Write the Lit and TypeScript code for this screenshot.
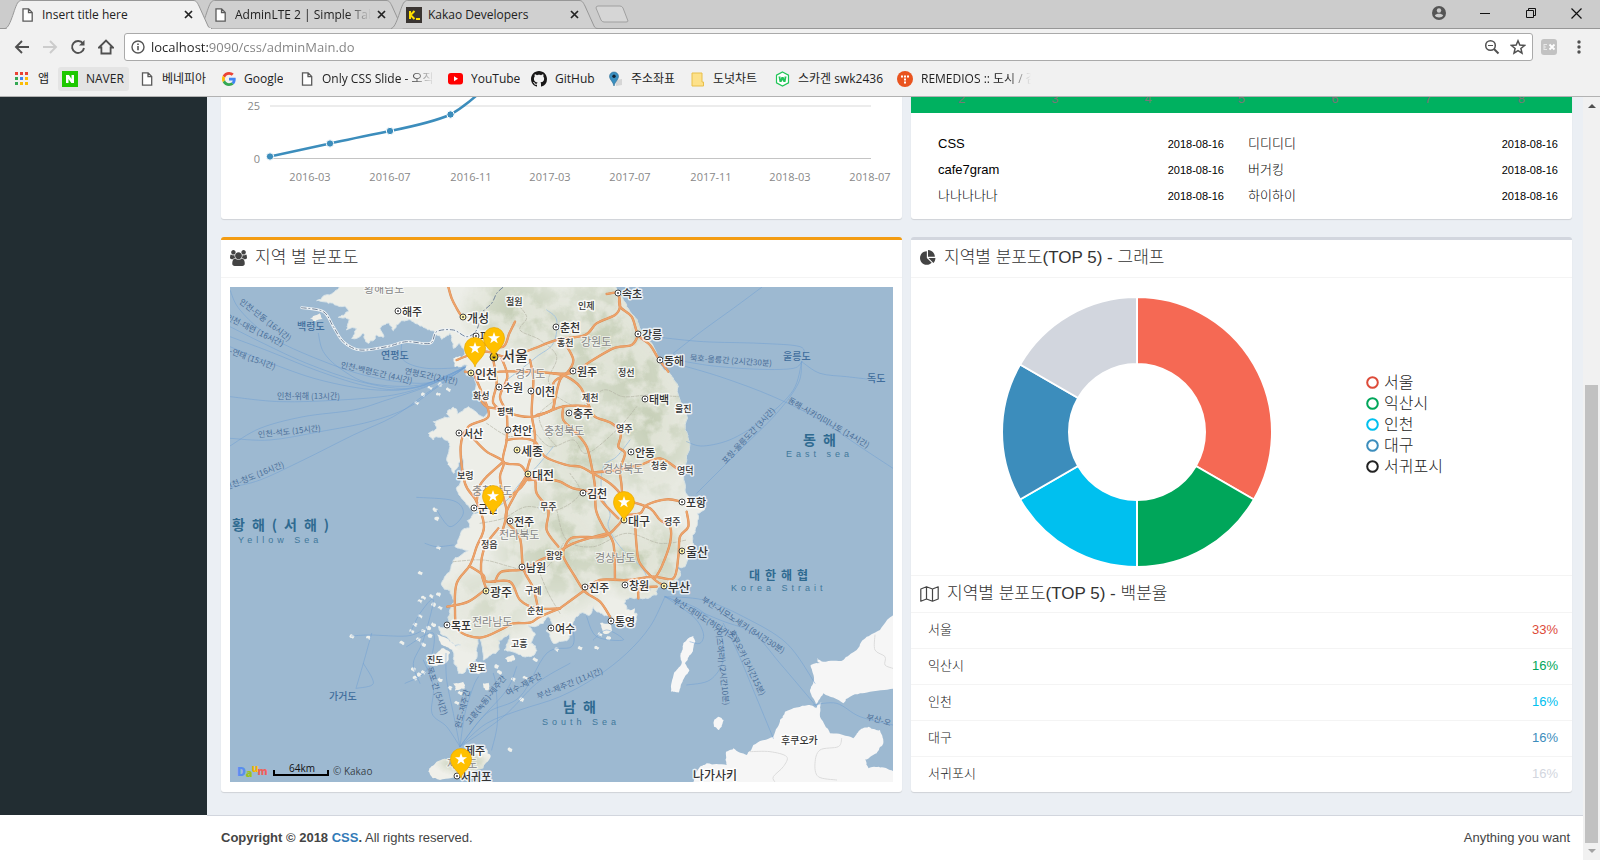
import { LitElement, html, svg, css } from "lit";
import { customElement } from "lit/decorators.js";

type Pt = [number, number];

/* ---------- geometry helpers ---------- */

const pts = (s: string): Pt[] => s.trim().split(/\s+/).map((p) => p.split(",").map(Number) as Pt);

/* Splits each edge and shifts the midpoints, so that a coast looks ragged. */
function rough(s: string, amp: number, seed = 7): string {
  let list = pts(s);
  let state = seed;
  const rnd = () => {
    state = (state * 16807) % 2147483647;
    return state / 2147483647 - 0.5;
  };
  let a = amp;
  for (let pass = 0; pass < 3; pass++) {
    const next: Pt[] = [];
    list.forEach((p, i) => {
      const q = list[(i + 1) % list.length];
      const len = Math.hypot(q[0] - p[0], q[1] - p[1]);
      next.push(p);
      if (len > 6) {
        const k = Math.min(a, len * 0.45);
        next.push([(p[0] + q[0]) / 2 + rnd() * k, (p[1] + q[1]) / 2 + rnd() * k]);
      }
    });
    list = next;
    a *= 0.6;
  }
  return "M" + list.map((p) => p[0].toFixed(1) + " " + p[1].toFixed(1)).join("L") + "Z";
}

/* Smooth open curve through the points. */
function smooth(s: string): string {
  const p = pts(s);
  let d = `M${p[0][0]} ${p[0][1]}`;
  for (let i = 0; i < p.length - 1; i++) {
    const a = p[Math.max(0, i - 1)], b = p[i], c = p[i + 1], e = p[Math.min(p.length - 1, i + 2)];
    d += `C${(b[0] + (c[0] - a[0]) / 6).toFixed(1)} ${(b[1] + (c[1] - a[1]) / 6).toFixed(1)} ${(c[0] - (e[0] - b[0]) / 6).toFixed(1)} ${(c[1] - (e[1] - b[1]) / 6).toFixed(1)} ${c[0]} ${c[1]}`;
  }
  return d;
}

/* ---------- map data (survey grid: three units to a pixel) ---------- */

const KOREA = rough(
  `365,15 340,38 290,62 330,68 375,78 385,95 355,112 388,118 380,150 410,146 395,175 430,160 445,190 470,165 490,172 480,145 500,130 520,152 545,122 580,125 600,138 640,152 665,178 690,160 700,205 720,188 735,222 705,240 715,262 742,256 738,285 765,292 770,340 805,385 790,412 745,380 712,402 700,382 680,402 690,412 640,425 650,445 625,460 640,480 665,470 690,500 680,540 702,580 715,550 722,522 728,580 712,620 722,650 748,682 762,700 742,722 750,742
   725,752 705,800 745,812 700,840 682,880 665,915 690,930 702,965 690,1000 690,1040 655,1040 662,1062 690,1085 722,1095 692,1105 702,1150 715,1180 745,1160 770,1135 776,1070 790,1140 828,1120 835,1080 870,1062 862,1090 852,1110 890,1120 930,1130 950,1112 932,1090 945,1060 925,1035 970,1030 985,1010 1000,1040 978,1052 1000,1090
   1040,1082 1055,1050 1065,1015 1080,1000 1110,1005 1120,980 1145,1000 1170,1005 1180,1030 1220,1040 1245,1030 1250,1000 1220,990 1215,960 1255,955 1310,945 1320,920 1350,915 1380,890 1370,860 1395,860 1420,790 1425,750 1432,700 1455,688 1425,670 1395,630 1395,560 1410,490 1395,450 1398,390 1380,360 1375,320 1345,275 1320,250 1295,190 1255,130 1220,80 1195,35 1185,15`, 12);

const ISLES = [
  rough("625,1475 650,1445 700,1430 760,1415 800,1405 812,1430 790,1465 740,1485 660,1500 640,1495", 8, 3),
  rough("640,1135 665,1105 690,1120 678,1150 650,1158 622,1150", 10, 5),
  rough("752,1155 780,1145 798,1160 775,1182 752,1172", 8, 9),
  rough("650,1060 680,1075 715,1110 690,1108 662,1090", 8, 11),
  rough("1140,1028 1170,1030 1175,1055 1150,1060", 8, 13),
  rough("1215,990 1245,985 1240,1030 1218,1038", 8, 15),
  rough("700,235 722,228 730,250 705,262", 6, 17),
  rough("855,1135 880,1125 885,1140 862,1146", 6, 18),
  rough("270,115 300,100 308,118 285,125", 6, 19),
  rough("700,1210 730,1205 735,1225 705,1232", 8, 21),
  rough("790,1210 806,1208 808,1228 796,1230", 6, 22),
];

const SPECKS: Pt[] = [
  [610, 955], [635, 950], [655, 945], [600, 965], [640, 975], [660, 985], [600, 1010], [585, 1035], [575, 1055], [610, 1055],
  [625, 1045], [595, 1080], [610, 1095], [630, 1068], [640, 1035], [580, 1170], [598, 1185], [585, 1195], [610, 1178], [660, 1200],
  [690, 1225], [720, 1240], [830, 1160], [838, 1178], [880, 1200], [915, 1195], [905, 1260], [545, 1090], [445, 1075], [395, 1070],
  [630, 325], [655, 345], [685, 330], [610, 345], [590, 370], [660, 315], [600, 880], [655, 805], [645, 690], [650, 718],
  [690, 555], [600, 130], [945, 1140], [1140, 1065], [1165, 1075], [1080, 1105], [1130, 1105], [870, 1410], [1010, 1110], [710, 1270],
];

const JAPAN = [
  rough("2030,995 1980,1050 1940,1070 1910,1110 1870,1140 1810,1145 1790,1133 1800,1150 1772,1155 1782,1195 1770,1230 1788,1275 1810,1240 1870,1270 1890,1250 1950,1235 2030,1225", 7, 23),
  rough("1415,1520 1440,1460 1460,1450 1520,1455 1518,1415 1540,1405 1580,1425 1600,1395 1660,1370 1680,1320 1695,1295 1765,1275 1790,1285 1805,1265 1800,1310 1830,1360 1900,1375 1920,1350 1945,1340 1980,1350 1990,1390 1970,1420 1936,1438 1945,1465 1985,1462 2030,1472 2030,1520", 7, 25),
  rough("1405,1075 1420,1068 1426,1085 1415,1120 1395,1150 1408,1172 1385,1210 1375,1238 1353,1235 1362,1180 1385,1150 1382,1120 1390,1090", 6, 27),
  rough("1482,1322 1495,1310 1511,1320 1505,1340 1495,1350 1482,1340", 4, 29),
];

const ROADS = [
  "685,21 695,55 710,85 725,110",
  "770,180 800,195 850,200 868,160 885,125",
  "710,240 750,225 800,215 860,230 930,210 1010,180 1095,165 1130,130 1185,105 1200,80 1195,40",
  "1160,42 1195,40 1200,80 1235,110 1255,165 1290,195 1315,235 1345,275",
  "735,275 790,285 840,275 940,275 1050,280 1110,245 1180,205 1235,195 1255,165",
  "845,235 862,290 840,350 860,400 860,480 850,545 900,555 920,580",
  "820,240 830,310 820,370 870,400 940,410 1010,385 1040,378 1100,380 1125,410 1175,430 1202,462 1195,500 1215,520 1200,570 1205,620 1210,720",
  "765,290 790,350 805,410 745,440 722,500 735,610 770,665 792,740 770,800 750,855 710,910 705,990 715,1050 780,1073 850,1045 880,1030 930,1028 960,1010 1020,985",
  "755,470 800,515 850,545 840,590 850,650 860,700 845,760",
  "850,545 800,590 778,620 770,665",
  "770,340 800,380 860,385",
  "920,585 885,645 858,700 865,730 900,775 910,865 940,925 955,990",
  "835,745 795,800 783,870 800,930",
  "748,858 790,885 800,905 870,905 900,960 950,985 1020,985",
  "800,925 745,965 682,980",
  "825,905 845,875 910,868 960,840 1000,825 1060,790 1160,760",
  "930,240 940,300 935,400 945,480 920,580 945,600 950,640 985,690 980,750 1015,800",
  "860,480 900,475 945,485 975,530 1040,555 1080,560 1115,578 1170,610 1205,650 1210,715",
  "925,600 990,600 1020,605 1060,625 1120,640 1165,685 1195,715",
  "1000,280 1040,290 1080,320 1100,360 1110,385",
  "1035,190 1060,240 1040,280 1000,310 1000,385 950,405",
  "1030,380 1030,420 1070,460 1100,500 1115,560 1125,620 1128,690 1150,740 1180,790 1185,900",
  "1210,705 1260,700 1280,675 1340,658 1385,665",
  "1210,715 1190,740 1150,770 1060,772 1035,800 1030,830 1065,890 1095,935 1140,965 1170,1010",
  "1235,665 1290,685 1320,720 1350,740 1350,790 1325,860 1305,895",
  "1400,695 1405,740 1380,770 1375,830 1360,895 1300,890 1220,900 1140,900 1095,930 1020,985",
  "1245,720 1250,800 1260,850 1305,900 1330,915",
  "1255,955 1260,925 1310,920",
  "1115,578 1190,570 1260,555 1320,535 1370,565",
  "1000,385 1020,300 1050,275",
  "925,590 905,620 870,650",
];

const FERRIES = [
  "30,30 60,90 150,170 300,240 450,290 600,310 690,290 735,262",
  "30,140 130,190 260,250 420,305 560,325 680,295 735,262",
  "30,170 150,215 300,275 450,320 580,325 735,262",
  "30,200 140,245 300,300 470,330 600,318 735,262",
  "30,350 180,365 360,360 520,345 640,310 735,262",
  "30,475 150,480 300,455 450,425 560,385 640,330 735,262",
  "30,498 120,445 250,410 400,390 500,360 620,320 735,262",
  "30,622 120,600 250,540 400,465 520,410 620,340 735,262",
  "295,160 310,215 360,265 450,310 600,315 735,262",
  "545,190 550,240 620,265 735,262",
  "590,652 700,662 730,700 690,740 650,690",
  "1360,220 1450,150 1540,85 1625,22",
  "1320,172 1450,185 1620,190 1740,200 1750,230",
  "1370,240 1480,258 1620,268 1720,265 1745,245",
  "1345,245 1500,290 1660,350 1800,420 1920,500 2019,565",
  "1745,245 1800,280 1880,290 1940,297",
  "1745,245 1720,330 1640,410 1540,475 1450,498 1400,485",
  "1745,245 1735,310 1670,400 1560,510 1430,640",
  "1335,950 1420,1010 1450,1060 1440,1090 1410,1085",
  "1335,950 1440,990 1500,1060 1510,1140 1470,1200 1400,1215",
  "1335,950 1450,960 1570,1010 1700,1090 1785,1210",
  "1335,950 1500,1020 1600,1060 1680,1150 1790,1280",
  "1510,1030 1550,1110 1600,1230 1660,1375",
  "1335,950 1290,1040 1220,1120 1130,1190 1020,1250 900,1290 800,1330 725,1395",
  "1780,1275 1850,1270 1920,1310 2019,1335",
  "720,1400 735,1300 760,1220 775,1190",
  "720,1400 700,1300 680,1200 678,1120",
  "720,1400 680,1340 636,1300 640,1220 610,1140",
  "720,1400 780,1320 860,1230 890,1160",
  "720,1400 800,1300 900,1250 980,1120 1055,1100 1060,1050",
  "720,1400 850,1310 950,1210 1050,1150",
  "815,1410 832,1330 828,1220 820,1180",
  "395,1068 450,1065 560,1068 610,1050",
  "455,1060 430,1150 408,1225",
  "430,1150 460,1210 410,1225",
  "570,1060 600,1000 640,960 610,1080 580,1150 600,1210",
  "555,1210 620,1170 640,1060 560,1100",
  "1100,1010 1130,1070 1210,1080 1160,1050 1120,1080",
  "615,790 650,800 700,795",
];

const BORDERS = [
  "880,60 920,110 900,150 960,180 1010,230 985,300 1010,350 960,400 970,450 1010,500",
  "1010,350 1080,380 1150,330 1210,350 1290,345 1375,350",
  "800,430 870,470 930,450 990,500 1060,480 1100,520 1190,450 1250,380",
  "780,730 850,715 920,680 1010,690 1080,640 1050,580",
  "1010,690 1040,780 1120,800 1220,760 1320,790 1400,780",
  "700,845 790,840 870,860 950,880 1000,840 1030,790",
  "960,880 985,940 1020,1000",
];

/* text, x, y, size, dot (0 none, 1 town, 2 metropolis) */
const TOWNS: [string, number, number, number, number][] = [
  ["해주", 545, 94, 11, 1], ["개성", 742, 112, 12, 2], ["철원", 857, 62, 9, 0], ["파주", 780, 168, 11, 1],
  ["서울", 846, 226, 14, 0], ["인천", 764, 278, 12, 2], ["수원", 850, 320, 11, 1], ["이천", 945, 332, 11, 1],
  ["화성", 760, 346, 9, 0], ["평택", 832, 394, 9, 0], ["서산", 730, 460, 11, 1], ["천안", 875, 451, 11, 1],
  ["세종", 904, 511, 12, 2], ["대전", 936, 583, 12, 2], ["보령", 712, 586, 9, 0], ["군산", 773, 684, 11, 1],
  ["전주", 881, 724, 11, 1], ["무주", 960, 677, 9, 0], ["춘천", 1020, 142, 11, 1], ["홍천", 1010, 187, 9, 0],
  ["인제", 1074, 76, 9, 0], ["속초", 1206, 40, 11, 1], ["강릉", 1266, 163, 11, 1], ["동해", 1331, 239, 11, 1],
  ["원주", 1070, 272, 11, 1], ["정선", 1194, 276, 9, 0], ["제천", 1086, 352, 9, 0], ["태백", 1286, 356, 11, 1],
  ["울진", 1365, 383, 9, 0], ["충주", 1059, 398, 11, 1], ["영주", 1188, 444, 9, 0], ["안동", 1246, 516, 11, 1],
  ["청송", 1293, 556, 9, 0], ["영덕", 1372, 571, 9, 0], ["김천", 1102, 640, 11, 1], ["포항", 1397, 667, 11, 1],
  ["대구", 1225, 720, 12, 2], ["경주", 1332, 723, 9, 0], ["정읍", 784, 793, 9, 0], ["함양", 978, 824, 9, 0],
  ["남원", 918, 862, 11, 1], ["광주", 810, 932, 12, 2], ["구례", 916, 931, 9, 0], ["순천", 922, 990, 9, 0],
  ["목포", 694, 1034, 11, 1], ["여수", 1004, 1045, 11, 1], ["고흥", 873, 1090, 9, 0], ["진도", 622, 1136, 9, 0],
  ["완도", 748, 1162, 9, 0], ["울산", 1397, 814, 12, 2], ["진주", 1108, 922, 11, 1], ["창원", 1228, 914, 11, 1],
  ["부산", 1343, 919, 12, 2], ["통영", 1186, 1022, 11, 1], ["제주", 734, 1410, 11, 0], ["서귀포", 722, 1488, 11, 1],
  ["나가사키", 1420, 1481, 12, 0], ["후쿠오카", 1684, 1377, 10, 0],
];

/* text, x, y */
const PROVINCES: [string, number, number][] = [
  ["황해남도", 432, 24], ["경기도", 886, 280], ["강원도", 1084, 182], ["충청북도", 972, 450], ["충청남도", 757, 630],
  ["경상북도", 1148, 563], ["전라북도", 838, 762], ["전라남도", 755, 1022], ["경상남도", 1124, 830], ["제주도", 680, 1449],
];

/* text, x, y, spacing class */
const SEAS: [string, number, number, string][] = [
  ["황해(서해)", 36, 732, "sea-ko"], ["Yellow Sea", 54, 780, "sea-en"], ["동해", 1748, 478, "sea-ko"],
  ["East sea", 1698, 523, "sea-en"], ["대한해협", 1588, 882, "sea-mid"], ["Korea Strait", 1532, 925, "sea-en"],
  ["남해", 1030, 1279, "sea-ko"], ["South Sea", 965, 1326, "sea-en"],
];

const ISLE_NAMES: [string, number, number][] = [
  ["백령도", 230, 135], ["연평도", 484, 222], ["울릉도", 1688, 226], ["독도", 1940, 291], ["가거도", 328, 1244],
];

/* text, x, y, angle */
const ROUTES: [string, number, number, number][] = [
  ["인천-단동 (16시간)", 62, 60, 38], ["인천-대련 (16시간)", 22, 108, 26], ["-연태 (15시간)", 30, 210, 20],
  ["인천-위해 (13시간)", 170, 346, 0], ["인천-석도 (15시간)", 115, 462, -6], ["인천-청도 (16시간)", 15, 620, -22],
  ["인천-백령도간 (4시간)", 362, 252, 13], ["연평도간(2시간)", 556, 270, 12], ["묵호-울릉간 (2시간30분)", 1410, 232, 4],
  ["동해-사카이미나토 (14시간)", 1708, 358, 30], ["포항-울릉도간 (3시간)", 1510, 545, -47],
  ["부산-시모노세키 (8시간30분)", 1450, 955, 33], ["부산-대마도(히타카츠)", 1362, 958, 32], ["후쿠오카 (3시간15분)", 1535, 1050, 64],
  ["(이즈하라) (2시간10분)", 1498, 1045, 84], ["부산-제주간 (11시간)", 950, 1248, -22], ["여수-제주간", 858, 1240, -28], ["고흥(녹동)-제주간", 742, 1328, -52],
  ["완도-제주간", 712, 1345, -76], ["목포 간 (5시간)", 630, 1160, 72], ["부산-오", 1940, 1308, 15],
];

const PINS: Pt[] = [[823, 232], [764, 262], [819, 705], [1211, 722], [723, 1494]];

const gx = (n: number) => Math.round(n / 3) - 10;
const gy = (n: number) => Math.round(n / 3) - 7;

/* ---------- page data ---------- */

const REGIONS = [
  { name: "서울", pct: "33%", share: 2, fill: "#f56954", tone: "red" },
  { name: "익산시", pct: "16%", share: 1, fill: "#00a65a", tone: "green" },
  { name: "인천", pct: "16%", share: 1, fill: "#00c0ef", tone: "aqua" },
  { name: "대구", pct: "16%", share: 1, fill: "#3c8dbc", tone: "blue" },
  { name: "서귀포시", pct: "16%", share: 1, fill: "#d2d6de", tone: "grey" },
];

const CAFES = [
  ["CSS", "2018-08-16", "디디디디", "2018-08-16"],
  ["cafe7gram", "2018-08-16", "버거킹", "2018-08-16"],
  ["나나나나나", "2018-08-16", "하이하이", "2018-08-16"],
];

const MONTHS: [string, number][] = [
  ["2016-03", 310], ["2016-07", 390], ["2016-11", 471], ["2017-03", 550], ["2017-07", 630], ["2017-11", 711], ["2018-03", 790], ["2018-07", 870],
];

/* ---------- icons ---------- */

const filePath = svg`<path d="M1 .8h5.6L10.200 4.400V13.200H1zM6.500 1v3.600h3.500" fill="#fff" stroke="#5a5a5a" stroke-width="1.300"/>`;
const fileIcon = html`<svg width="11" height="14" viewBox="0 0 11 14">${filePath}</svg>`;
const tabFileIcon = html`<svg width="16" height="14" viewBox="-2 0 16 14">${filePath}</svg>`;
const kakaoIcon = html`<svg width="16" height="16" viewBox="0 0 16 16"><rect width="16" height="16" fill="#3a3532"/><path d="M4 4v8M8.500 4L4.500 8l4 4M10 12h4" stroke="#ffde00" stroke-width="2" fill="none"/></svg>`;
const closeIcon = html`<svg width="9" height="9" viewBox="0 0 9 9"><path d="M1 1l7 7M8 1l-7 7" stroke="#222" stroke-width="1.700"/></svg>`;

const bookmarkIcons = {
  apps: html`<svg width="16" height="14" viewBox="-1 0 16 14">${[0, 1, 2].map((r) => [0, 1, 2].map((c) => svg`<rect x=${c * 5} y=${r * 5} width="3" height="3" fill=${[["#ea4335", "#ea4335", "#ea4335"], ["#34a853", "#4285f4", "#fbbc05"], ["#34a853", "#fbbc05", "#fbbc05"]][r][c]}/>`))}</svg>`,
  naver: html`<svg width="16" height="16" viewBox="0 0 16 16"><rect width="16" height="16" fill="#1ec800"/><path d="M4 4h3l2.500 4V4H12v8H9.300L6.500 8v4H4z" fill="#fff"/></svg>`,
  file: fileIcon,
  google: html`<svg width="14" height="14" viewBox="0 0 48 48"><path fill="#EA4335" d="M24 9.500c3.540 0 6.710 1.220 9.210 3.600l6.850-6.850C35.900 2.380 30.470 0 24 0 14.620 0 6.510 5.380 2.560 13.220l7.980 6.190C12.430 13.720 17.740 9.500 24 9.500z"/><path fill="#4285F4" d="M46.980 24.550c0-1.570-.15-3.090-.38-4.550H24v9.020h12.940c-.58 2.960-2.260 5.480-4.780 7.180l7.730 6c4.510-4.180 7.090-10.360 7.090-17.650z"/><path fill="#FBBC05" d="M10.530 28.590c-.48-1.450-.76-2.990-.76-4.590s.27-3.140.76-4.590l-7.980-6.190C.92 16.460 0 20.120 0 24c0 3.880.92 7.540 2.560 10.780l7.970-6.190z"/><path fill="#34A853" d="M24 48c6.480 0 11.930-2.130 15.890-5.810l-7.730-6c-2.150 1.450-4.920 2.300-8.160 2.300-6.260 0-11.570-4.220-13.470-9.910l-7.980 6.190C6.510 42.620 14.620 48 24 48z"/></svg>`,
  youtube: html`<svg width="15" height="12" viewBox="0 0 15 12"><rect width="15" height="11.500" rx="3" fill="#f00"/><path d="M6 3.300v5l4-2.500z" fill="#fff"/></svg>`,
  github: html`<svg width="16" height="16" viewBox="0 0 16 16"><path fill="#181717" d="M8 0C3.580 0 0 3.580 0 8c0 3.540 2.290 6.530 5.470 7.590.4.070.55-.17.55-.38 0-.19-.01-.82-.01-1.490-2.010.37-2.530-.49-2.690-.94-.09-.23-.48-.94-.82-1.130-.28-.15-.68-.52-.01-.53.63-.01 1.080.58 1.230.82.72 1.210 1.870.87 2.330.66.07-.52.28-.87.51-1.070-1.780-.2-3.640-.89-3.640-3.950 0-.87.31-1.590.82-2.150-.08-.2-.36-1.020.08-2.120 0 0 .67-.21 2.200.82.64-.18 1.320-.27 2-.27s1.360.09 2 .27c1.530-1.040 2.200-.82 2.200-.82.44 1.100.16 1.920.08 2.120.51.56.82 1.270.82 2.150 0 3.070-1.870 3.750-3.650 3.950.29.25.54.73.54 1.480 0 1.070-.01 1.930-.01 2.200 0 .21.15.46.55.38A8.010 8.010 0 0 0 16 8c0-4.420-3.580-8-8-8z"/></svg>`,
  pin: html`<svg width="14" height="16" viewBox="0 0 14 16"><path d="M7 9l6-1v6l-6 1z" fill="#d6d6d6"/><path d="M5 1a4.500 4.500 0 0 1 4.500 4.500C9.500 8.500 6 10.500 5 15 4 10.500.5 8.500.5 5.500A4.500 4.500 0 0 1 5 1z" fill="#3a8fc0" stroke="#2a6d96" stroke-width=".6"/><circle cx="5" cy="5.200" r="1.700" fill="#123"/></svg>`,
  folder: html`<svg width="14" height="15" viewBox="0 0 14 15"><path d="M1 1h10v9h1.500v4H1z" fill="#fde18a" stroke="#e8bf4a"/></svg>`,
  skagen: html`<svg width="15" height="16" viewBox="0 0 15 16"><path d="M7.500 1l6 3.200v7.600l-6 3.200-6-3.200V4.200z" fill="#fff" stroke="#22c558" stroke-width="1.200"/><path d="M3.500 5.500h2V8l1-2h2l1 2V5.500h2L10.500 11h-2l-1-2-1 2h-2z" fill="#22c558"/></svg>`,
  remedios: html`<svg width="16" height="16" viewBox="0 0 16 16"><circle cx="8" cy="8" r="8" fill="#e9541f"/><path d="M4 4.500h2v2H4zM7 4.500h2v2H7zM10 4.500h2v2h-2zM7 7.500h2v2H7zM7 10.500h2v2H7z" fill="#fff"/></svg>`,
};

const BOOKMARKS = [
  { icon: bookmarkIcons.apps, text: "앱" }, { icon: bookmarkIcons.naver, text: "NAVER", hot: true }, { icon: bookmarkIcons.file, text: "베네피아" },
  { icon: bookmarkIcons.google, text: "Google" }, { icon: bookmarkIcons.file, text: "Only CSS Slide - 오직", fade: true },
  { icon: bookmarkIcons.youtube, text: "YouTube" }, { icon: bookmarkIcons.github, text: "GitHub" }, { icon: bookmarkIcons.pin, text: "주소좌표" },
  { icon: bookmarkIcons.folder, text: "도넛차트" }, { icon: bookmarkIcons.skagen, text: "스카겐 swk2436" },
  { icon: bookmarkIcons.remedios, text: "REMEDIOS :: 도시 / 감", fade: true },
] as { icon: unknown; text: string; hot?: boolean; fade?: boolean }[];

/* ---------- browser frame ---------- */

@customElement("browser-frame")
class BrowserFrame extends LitElement {
  static styles = css`
    :host { display: block; font: 12px/16px "Open Sans", "Noto Sans CJK KR", sans-serif; color: #222; background: #f1f1f1; border-bottom: 1px solid #b2b2b2; }
    button { border: 0; padding: 0; background: none; display: grid; place-items: center; }
    .strip { display: flex; height: 28px; background: #ccc; border-bottom: 1px solid #979797; padding-left: 6px; }
    .tab { position: relative; display: flex; align-items: center; width: 193px; height: 29px; padding: 0 6px 0 14px; box-sizing: border-box; gap: 6px; }
    .tab svg.shape { position: absolute; left: -1px; top: 0; z-index: 0; }
    .tab > :not(.shape) { z-index: 1; }
    .tab.on { z-index: 2; }
    .tab svg { flex: none; }
    .label { flex: 1; white-space: nowrap; overflow: hidden; }
    .fade { -webkit-mask-image: linear-gradient(to left, transparent, #000 24px); }
    .plus { margin-left: 10px; width: 34px; }
    .win { margin-left: auto; display: flex; width: 168px; justify-content: space-between; align-items: center; padding-right: 18px; box-sizing: border-box; height: 26px; }
    .bar { display: flex; align-items: center; height: 36px; padding-left: 14px; }
    .nav { display: flex; gap: 12px; margin-right: 10px; }
    .omni { flex: 1; display: flex; align-items: center; height: 28px; box-sizing: border-box; border: 1px solid #aaa; border-radius: 3px; background: #fff; padding: 0 6px; gap: 4px; }
    .omni input { flex: 1; border: 0; outline: 0; padding: 0; font: 13px/20px "Open Sans", sans-serif; color: transparent; background: linear-gradient(to right, #222 57px, #808080 57px); -webkit-background-clip: text; background-clip: text; }
    .omni .right { display: flex; gap: 10px; }
    .ext { margin-left: 8px; }
    .more { margin: 0 19px 0 20px; }
    .marks { display: grid; grid-template-columns: 48px 78px 82px 78px 148px 83px 78px 82px 84px 122px 147px; padding: 2px 0 5px 10px; }
    .mark { display: flex; align-items: center; gap: 8px; height: 24px; padding-left: 4px; color: #222; text-decoration: none; white-space: nowrap; overflow: hidden; border-radius: 3px; box-sizing: border-box; }
    .mark span { overflow: hidden; }
    .mark svg { flex: none; min-width: 14px; }
    .mark.hot { background: #e4e4e4; width: 71px; }
    .mark.soft { margin-right: 9px; }
  `;
  tab(on: boolean, icon: unknown, text: string) {
    return html`<div class="tab ${on ? "on" : ""}">
      <svg class="shape" width="209" height="29" viewBox="0 0 209 29"><path d="M0 28.500C6 28 10 3 14 1.500C15 .5 16 .5 17 .5H188C191 .5 192 2 194 6L203 26C204 28 205 28.500 207 28.500" fill=${on ? "#f1f1f1" : "#d0d0d0"} stroke="#979797"/>${on ? svg`<path d="M2 28.500H206" stroke="#f1f1f1"/>` : ""}</svg>
      ${icon}<span class="label ${text.length > 20 ? "fade" : ""}">${text}</span><button aria-label="Close">${closeIcon}</button>
    </div>`;
  }
  render() {
    return html`
      <div class="strip">
        ${this.tab(true, tabFileIcon, "Insert title here")}
        ${this.tab(false, tabFileIcon, "AdminLTE 2 | Simple Tables")}
        ${this.tab(false, kakaoIcon, "Kakao Developers")}
        <button class="plus" aria-label="New tab"><svg width="34" height="18" viewBox="0 0 34 18"><path d="M3 1H25Q27 1 28 3L33 16Q33 17 31 17H9Q7 17 6 15L1 3Q1 1 3 1Z" fill="#d6d6d6" stroke="#a0a0a0"/></svg></button>
        <div class="win">
          <button aria-label="Profile"><svg width="14" height="14" viewBox="0 0 14 14"><circle cx="7" cy="7" r="7" fill="#555"/><circle cx="7" cy="4.500" r="2.200" fill="#ccc"/><path d="M2.800 9.500C4 7.300 10 7.300 11.200 9.500 10 12 4 12 2.800 9.500z" fill="#ccc"/></svg></button>
          <button aria-label="Minimize"><svg width="11" height="11"><path d="M0 5.500h10" stroke="#111"/></svg></button>
          <button aria-label="Restore"><svg width="11" height="11" fill="none" stroke="#111"><path d="M.5 2.500h7v7h-7zM2.500 2.500v-2h7v7h-2"/></svg></button>
          <button aria-label="Close window"><svg width="11" height="11"><path d="M.5.5l10 10M10.500.5l-10 10" stroke="#111" stroke-width="1.200"/></svg></button>
        </div>
      </div>
      <div class="bar">
        <div class="nav">
          <button aria-label="Back"><svg width="16" height="16" fill="none" stroke="#505050" stroke-width="1.900"><path d="M15 8H2M8 2L2 8l6 6"/></svg></button>
          <button aria-label="Forward"><svg width="16" height="16" fill="none" stroke="#ccc" stroke-width="1.900"><path d="M1 8h13M8 2l6 6-6 6"/></svg></button>
          <button aria-label="Reload"><svg width="16" height="16" fill="none" stroke="#505050" stroke-width="1.900"><path d="M13 4.500A6 6 0 1 0 14 9"/><path d="M14.500 1v5.500H9z" fill="#505050" stroke="none"/></svg></button>
          <button aria-label="Home"><svg width="16" height="16" fill="none" stroke="#505050" stroke-width="1.800"><path d="M1 8.500L8 1.500l7 7H12.600V14.500H3.400V8.500z"/></svg></button>
        </div>
        <label class="omni">
          <svg width="16" height="16" viewBox="0 0 16 16"><circle cx="7" cy="8" r="6" fill="none" stroke="#555" stroke-width="1.400"/><path d="M7 7v4.200M7 4.500v1.400" stroke="#555" stroke-width="1.600"/></svg>
          <input aria-label="Address" value="localhost:9090/css/adminMain.do" />
          <span class="right">
            <svg width="16" height="16" fill="none" stroke="#505050"><circle cx="6.500" cy="6.500" r="4.800" stroke-width="1.500"/><path d="M10 10l4.500 4.500" stroke-width="2"/><path d="M4 6.500h5"/></svg>
            <svg width="16" height="16"><path d="M8 1.800l1.800 4.300 4.700.4-3.600 3 1.100 4.600L8 11.700l-4 2.400 1.100-4.600-3.600-3 4.700-.4z" fill="none" stroke="#505050" stroke-width="1.500"/></svg>
          </span>
        </label>
        <svg class="ext" width="16" height="16"><rect width="16" height="16" rx="3" fill="#c2c2c2"/><path d="M3 5v6M3 5.500h3M3 8h2M3 10.500h3" stroke="#e8e8e8" fill="none"/><path d="M8.500 5.500l5 5M13.500 5.500l-5 5" stroke="#fff" stroke-width="1.800"/></svg>
        <button class="more" aria-label="Menu"><svg width="4" height="16" fill="#505050"><circle cx="2" cy="3" r="1.700"/><circle cx="2" cy="8" r="1.700"/><circle cx="2" cy="13" r="1.700"/></svg></button>
      </div>
      <nav class="marks">
        ${BOOKMARKS.map((b) => html`<a href="#" class="mark ${b.hot ? "hot" : ""} ${b.fade ? "soft" : ""}">${b.icon}<span class=${b.fade ? "fade" : ""}>${b.text}</span></a>`)}
      </nav>`;
  }
}

/* ---------- map ---------- */

@customElement("region-map")
class RegionMap extends LitElement {
  static styles = css`
    :host { display: block; background: #9db9d1; font-weight: 400; }
    svg { display: block; width: 100%; }
    text { font-family: "Noto Sans CJK KR", sans-serif; dominant-baseline: central; }
    .s9 { font-size: 9px; } .s10 { font-size: 10px; } .s11 { font-size: 11px; } .s12 { font-size: 12px; } .s14 { font-size: 14px; }
    .town { fill: #333; font-weight: 500; stroke: #fff; stroke-width: 3px; stroke-opacity: .8; paint-order: stroke; stroke-linejoin: round; }
    .prov { fill: #858585; font-size: 11px; stroke: #fff; stroke-width: 2px; stroke-opacity: .6; paint-order: stroke; }
    .isle { fill: #3f6d9c; font-size: 10px; font-weight: 500; }
    .route { fill: #4a6e98; font-size: 8px; }
    .sea-ko { fill: #2f6a90; font-size: 14px; font-weight: 700; letter-spacing: 7px; }
    .sea-mid { fill: #2f6a90; font-size: 12px; font-weight: 700; letter-spacing: 5px; }
    .sea-en { fill: #3f789b; font-size: 9px; letter-spacing: 4px; font-family: "Liberation Sans", sans-serif; }
    .scale { font-size: 10px; fill: #111; font-family: "Open Sans", sans-serif; }
    .logo { font-size: 12px; font-weight: 800; font-family: "Open Sans", sans-serif; }
  `;
  render() {
    return html`<svg viewBox="0 0 663 495" role="img" aria-label="지역 별 분포도">
      <defs>
        <filter id="relief" x="0" y="0" width="100%" height="100%">
          <feTurbulence type="fractalNoise" baseFrequency="0.016" numOctaves="5" seed="12"/>
          <feColorMatrix values="0 0 0 0 0.56  0 0 0 0 0.62  0 0 0 0 0.47  4.600 0 0 0 -1.800"/>
        </filter>
        <radialGradient id="hill"><stop offset="0" stop-color="#fff"/><stop offset=".6" stop-color="#fff" stop-opacity=".55"/><stop offset="1" stop-color="#fff" stop-opacity="0"/></radialGradient>
        <mask id="hills" maskUnits="userSpaceOnUse" x="0" y="0" width="2100" height="1600">
          <ellipse cx="1150" cy="190" rx="260" ry="270" fill="url(#hill)"/><ellipse cx="1290" cy="430" rx="180" ry="300" fill="url(#hill)"/>
          <ellipse cx="1010" cy="800" rx="220" ry="230" fill="url(#hill)"/><ellipse cx="1260" cy="830" rx="190" ry="140" fill="url(#hill)"/>
          <ellipse cx="880" cy="90" rx="170" ry="140" fill="url(#hill)"/><ellipse cx="1070" cy="520" rx="150" ry="190" fill="url(#hill)"/>
          <ellipse cx="730" cy="1450" rx="90" ry="40" fill="url(#hill)"/><ellipse cx="800" cy="980" rx="170" ry="150" fill="url(#hill)" opacity=".6"/>
        </mask>
        <clipPath id="land"><path d=${KOREA}/><path d=${ISLES[0]}/></clipPath>
      </defs>
      <g transform="translate(-10 -7) scale(.33333)" fill="none" stroke-linejoin="round" stroke-linecap="round">
        <path d=${KOREA} fill="#edeee8" stroke="#dbe5e8" stroke-width="3"/>
        ${ISLES.map((d) => svg`<path d=${d} fill="#f0f0ea"/>`)}
        ${SPECKS.map(([x, y], i) => svg`<path d=${rough(`${x - 7},${y} ${x - 2},${y - 8} ${x + 8},${y - 3} ${x + 4},${y + 6}`, 9, i + 31)} fill="#eef0ec"/>`)}
        ${JAPAN.map((d) => svg`<path d=${d} fill="#f6f6f6"/>`)}
        <g clip-path="url(#land)"><g mask="url(#hills)"><rect x="0" y="0" width="2100" height="1600" fill="#d0d5c0" opacity=".5"/><rect x="0" y="0" width="2100" height="1600" filter="url(#relief)"/></g></g>
        <path d=${smooth("1590,1415 1650,1415 1700,1430 1690,1460 1660,1490 1665,1506")} stroke="#dcdcdc" stroke-width="3"/>
        <path d=${smooth("1865,1375 1855,1400 1800,1410 1785,1450 1795,1490 1850,1500")} stroke="#dcdcdc" stroke-width="3"/>
        <path d=${smooth("1965,1065 1965,1110 1995,1130 1995,1155 2019,1165")} stroke="#dcdcdc" stroke-width="3"/>
        ${BORDERS.map((d) => svg`<path d=${smooth(d)} stroke="#b4b3a4" stroke-width="2" stroke-dasharray="9 5"/>`)}
        <path d=${smooth("860,300 900,270 950,230 1000,190 1010,120 980,90")} stroke="#a9c6dd" stroke-width="3"/>
        <path d=${smooth("1230,480 1190,530 1150,560 1145,640 1170,700 1165,740 1200,800 1270,870 1290,930")} stroke="#a9c6dd" stroke-width="3"/>
        <path d=${smooth("765,700 850,670 900,610 950,560 1000,500")} stroke="#a9c6dd" stroke-width="3"/>
        ${FERRIES.map((d) => svg`<path d=${smooth(d)} stroke="#6f9fd2" stroke-opacity=".6" stroke-width="2.500"/>`)}
        <path d=${smooth("245,83 310,95 340,140 370,185 420,210 500,200 560,185 630,190 650,155 700,150 740,170 775,150")} stroke="#eef2f4" stroke-width="8"/>
        <path d=${smooth("245,83 310,95 340,140 370,185 420,210 500,200 560,185 630,190 650,155 700,150 740,170 770,150 785,100 815,70 830,40 850,21")} stroke="#71839a" stroke-width="3" stroke-dasharray="14 8 3 8"/>
        ${ROADS.map((d) => svg`<path d=${smooth(d)} stroke="#d98a50" stroke-width="7"/>`)}
        ${ROADS.map((d) => svg`<path d=${smooth(d)} stroke="#eda36b" stroke-width="5"/>`)}
      </g>
      ${PROVINCES.map(([t, x, y]) => svg`<text class="prov" x=${gx(x)} y=${gy(y)}>${t}</text>`)}
      ${ROUTES.map(([t, x, y, a]) => svg`<text class="route" transform="translate(${gx(x)} ${gy(y)}) rotate(${a})">${t}</text>`)}
      ${ISLE_NAMES.map(([t, x, y]) => svg`<text class="isle" x=${gx(x)} y=${gy(y)}>${t}</text>`)}
      ${SEAS.map(([t, x, y, c]) => svg`<text class=${c} x=${gx(x)} y=${gy(y)}>${t}</text>`)}
      ${TOWNS.map(([t, x, y, s, dot]) => svg`
        ${dot ? svg`<circle cx=${gx(x) - 4} cy=${gy(y)} r="3" fill=${dot === 2 ? "#fff3a8" : "#fff"} stroke="#444"/><circle cx=${gx(x) - 4} cy=${gy(y)} r="1" fill="#444"/>` : ""}
        <text class="town s${s}" x=${gx(x)} y=${gy(y)}>${t}</text>`)}
      <circle cx="264" cy="70" r="4" fill="#e8c21a" stroke="#333"/><circle cx="264" cy="70" r="1.500" fill="#222"/>
      ${PINS.map(([x, y]) => svg`<g transform="translate(${gx(x)} ${gy(y)})"><path d="M0 0C-1-6-10.500-10-10.500-19A10.500 10.500 0 0 1 10.500-19C10.500-10 1-6 0 0z" fill="#ffc000" stroke="#e8a800" stroke-width=".7"/><path d="M0-25l1.500 4.200 4.500.1-3.600 2.700 1.300 4.300L0-16.200l-3.700 2.500 1.300-4.300L-6-20.700l4.500-.1z" fill="#fff"/></g>`)}
      <text class="logo" x="7" y="484"><tspan fill="#5a8df0">D</tspan><tspan fill="#9bc31c" font-size="11" dy="1">a</tspan><tspan fill="#f8b500" font-size="10" dx="-1" dy="-4">u</tspan><tspan fill="#ef5f5a" font-size="10" dx="-1" dy="3">m</tspan></text>
      <path d="M44 483v5h54v-5" fill="none" stroke="#000" stroke-width="2"/>
      <text class="scale" x="59" y="481">64km</text>
      <text class="scale" x="103" y="484" fill-opacity=".75">© Kakao</text>
    </svg>`;
  }
}

/* ---------- application ---------- */

@customElement("app-root")
class AppRoot extends LitElement {
  static styles = css`
    :host { display: flex; flex-direction: column; height: 100vh; overflow: hidden; font: 300 13px/18px "Liberation Sans", "Noto Sans CJK KR", sans-serif; color: #222; background: #fff; }
    .view { flex: 1; min-height: 0; display: flex; }
    .page { flex: 1; min-width: 0; overflow: hidden; display: flex; flex-direction: column; justify-content: flex-end; }
    .body { flex: none; display: flex; background: #222d32; }
    .side { width: 207px; flex: none; }
    .content { flex: 1; background: #ebeff4; display: grid; grid-template-columns: 681fr 661fr; gap: 18px 9px; padding: 0 11px 23px 14px; }
    .box { display: flex; flex-direction: column; background: #fff; border-radius: 3px; box-shadow: 0 1px 1px rgba(0, 0, 0, .12); min-width: 0; }
    .box.warn { border-top: 3px solid #f39c12; }
    .box.plain { border-top: 3px solid #d2d6de; }
    .chart svg { display: block; width: 100%; }
    .axis { font: 11px "Open Sans", sans-serif; fill: #888; }
    .green { flex: 1; background: #00b160; display: flex; align-items: flex-end; justify-content: space-between; padding: 0 47px 6px; color: #777; font-size: 13px; line-height: 16px; }
    .cafes { padding: 18px 14px 10px 27px; }
    table { width: 100%; border-collapse: collapse; table-layout: fixed; }
    td { padding: 0; height: 26px; color: #000; }
    td.date { text-align: right; font-size: 11px; }
    td.mid { padding-right: 24px; }
    h3 { display: flex; align-items: center; gap: 8px; margin: 0; height: 36px; padding: 0 9px 1px; border-bottom: 1px solid #f4f4f4; font-size: 17px; line-height: 20px; font-weight: 300; color: #333; }
    h3 svg { fill: #444; flex: none; }
    h3.next { border-top: 1px solid #f4f4f4; border-bottom: 0; height: 35px; }
    .map { padding: 9px; }
    .donut { display: grid; grid-template-columns: 452fr 209fr; align-items: center; justify-items: center; padding: 10px 0 0; height: 287px; }
    .legend { list-style: none; margin: 0; padding: 0 0 14px 3px; justify-self: start; font-size: 16px; line-height: 21px; }
    .legend li { display: flex; align-items: center; gap: 5px; }
    .rates { list-style: none; margin: 0; padding: 0; }
    .rates a { display: flex; justify-content: space-between; align-items: center; height: 33px; padding: 0 14px 2px 17px; border-top: 1px solid #f4f4f4; color: #222; text-decoration: none; }
    .red { color: #dd4b39; } .green-t { color: #00a65a; } .aqua { color: #00c0ef; } .blue { color: #3c8dbc; } .grey { color: #d2d6de; }
    .foot { flex: none; display: flex; justify-content: space-between; align-items: center; height: 44px; margin-left: 207px; padding: 0 13px 0 14px; border-top: 1px solid #d2d6de; background: #fff; color: #444; font-size: 12px; }
    .foot strong { font-weight: 700; }
    .foot a { color: #337ab7; text-decoration: none; }
    .foot { font-size: 13px; }
    .scroll { width: 17px; flex: none; background: #f1f1f1; display: flex; flex-direction: column; align-items: center; justify-content: space-between; padding: 7px 0; box-sizing: border-box; }
    .thumb { width: 13px; flex: 461; background: #c1c1c1; }
    .track { flex: 273; }
    .up, .down { border: 4px solid transparent; }
    .up { border-bottom-color: #505050; border-top: 0; margin: 0 0 5px; }
    .down { border-top-color: #a3a3a3; border-bottom: 0; margin: 6px 0 0; }
  `;
  slices() {
    const total = REGIONS.reduce((n, r) => n + r.share, 0);
    let at = 0;
    const P = (r: number, t: number) => `${(135 + r * Math.sin(t)).toFixed(2)} ${(135 - r * Math.cos(t)).toFixed(2)}`;
    return REGIONS.map((r) => {
      const a = (at / total) * Math.PI * 2;
      at += r.share;
      const b = (at / total) * Math.PI * 2;
      return svg`<path d="M${P(135, a)}A135 135 0 0 1 ${P(135, b)}L${P(68, b)}A68 68 0 0 0 ${P(68, a)}Z" fill=${r.fill} stroke="#fff" stroke-width="2"/>`;
    });
  }
  render() {
    const tone = (t: string) => (t === "green" ? "green-t" : t);
    return html`
      <browser-frame></browser-frame>
      <div class="view">
        <div class="page">
          <div class="body">
            <aside class="side"></aside>
            <main class="content">
              <section class="box chart">
                <svg viewBox="221 19 681 200">
                  <path d="M270 106H871" stroke="#ececec" stroke-width="2"/><path d="M270 158.500H871" stroke="#c4c4c4"/>
                  <text class="axis" x="260" y="110" text-anchor="end">25</text><text class="axis" x="260" y="163" text-anchor="end">0</text>
                  ${MONTHS.map(([m, x]) => svg`<text class="axis" x=${x} y="181" text-anchor="middle">${m}</text>`)}
                  <path d="M270 156.500C290 152 310 148 330 143.500S370 135 390 131S436 121 450.500 114.500C462 108 472 100 500 75" fill="none" stroke="#3c8dbc" stroke-width="2.500"/>
                  ${[[270, 156.5], [330, 143.5], [390, 131], [450.5, 114.5]].map(([x, y]) => svg`<circle cx=${x} cy=${y} r="3.700" fill="#3c8dbc" stroke="#fff"/>`)}
                </svg>
              </section>
              <section class="box">
                <div class="green">${[2, 3, 4, 5, 6, 7, 8].map((n) => html`<span>${n}</span>`)}</div>
                <div class="cafes"><table><tbody>
                  ${CAFES.map((r) => html`<tr><td>${r[0]}</td><td class="date mid">${r[1]}</td><td>${r[2]}</td><td class="date">${r[3]}</td></tr>`)}
                </tbody></table></div>
              </section>
              <section class="box warn">
                <h3><svg width="17" height="16" viewBox="0 0 1920 1792"><path d="M593 896q-162 5-265 128h-134q-82 0-138-40.500t-56-118.500q0-353 124-353 6 0 43.500 21t97.500 42.500 119 21.500q67 0 133-23-5 37-5 66 0 139 81 256zm1071 637q0 120-73 189.500t-194 69.500h-874q-121 0-194-69.500t-73-189.500q0-53 3.500-103.500t14-109 26.500-108.500 43-97.500 62-81 85.500-53.500 111.500-20q10 0 43 21.500t73 48 107 48 135 21.500 135-21.500 107-48 73-48 43-21.500q61 0 111.500 20t85.500 53.500 62 81 43 97.500 26.500 108.500 14 109 3.500 103.500zm-1024-1277q0 106-75 181t-181 75-181-75-75-181 75-181 181-75 181 75 75 181zm704 384q0 159-112.500 271.500t-271.500 112.500-271.500-112.500-112.500-271.500 112.500-271.500 271.500-112.500 271.500 112.500 112.500 271.500zm576 225q0 78-56 118.500t-138 40.500h-134q-103-123-265-128 81-117 81-256 0-29-5-66 66 23 133 23 59 0 119-21.500t97.500-42.500 43.500-21q124 0 124 353zm-128-609q0 106-75 181t-181 75-181-75-75-181 75-181 181-75 181 75 75 181z"/></svg>지역 별 분포도</h3>
                <div class="map"><region-map></region-map></div>
              </section>
              <section class="box plain">
                <h3><svg width="16" height="16" viewBox="0 0 1792 1792"><path d="M768 890l546 546q-106 108-247.500 168t-298.500 60q-209 0-385.500-103t-279.500-279.500-103-385.500 103-385.500 279.500-279.500 385.500-103v762zm187 6h773q0 157-60 298.500t-168 247.500zm709-128h-768v-768q209 0 385.500 103t279.500 279.500 103 385.500z"/></svg>지역별 분포도(TOP 5) - 그래프</h3>
                <div class="donut">
                  <svg width="270" height="270" viewBox="0 0 270 270">${this.slices()}</svg>
                  <ul class="legend">${REGIONS.map((r, i) => html`<li><svg class=${i === 4 ? "" : tone(r.tone)} width="13" height="13"><circle cx="6.500" cy="6.500" r="5.300" fill="none" stroke="currentColor" stroke-width="2"/></svg>${r.name}</li>`)}</ul>
                </div>
                <h3 class="next"><svg width="19" height="16" viewBox="0 0 19 16"><path d="M.8 3L6.500.8v12.200L.8 15.200zM6.500.8L12.500 3v12.200L6.500 13M12.500 3L18.200.8v12.200l-5.700 2.200" fill="none" stroke="#444" stroke-width="1.200" stroke-linejoin="round"/></svg>지역별 분포도(TOP 5) - 백분율</h3>
                <ul class="rates">${REGIONS.map((r) => html`<li><a href="#">${r.name}<span class=${tone(r.tone)}>${r.pct}</span></a></li>`)}</ul>
              </section>
            </main>
          </div>
          <footer class="foot"><span><strong>Copyright © 2018 <a href="#">CSS</a>.</strong> All rights reserved.</span><span>Anything you want</span></footer>
        </div>
        <div class="scroll" aria-hidden="true"><i class="up"></i><div class="track"></div><div class="thumb"></div><i class="down"></i></div>
      </div>`;
  }
}
